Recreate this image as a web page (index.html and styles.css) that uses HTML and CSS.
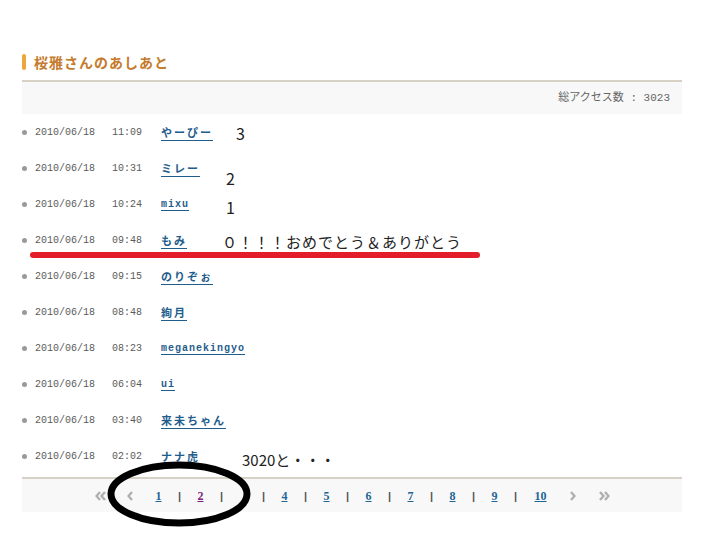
FILE: index.html
```html
<!DOCTYPE html>
<html lang="ja">
<head>
<meta charset="utf-8">
<title>桜雅さんのあしあと</title>
<link rel="stylesheet" href="styles.css">
</head>
<body>
<div class="page">
  <h2 class="title">桜雅さんのあしあと</h2>
  <div class="summary">総アクセス数 : 3023</div>
  <ul class="visits">
    <li class="visit"><span class="dot"></span><span class="date">2010/06/18</span><span class="time">11:09</span><a class="name jp" href="#">やーぴー</a></li>
    <li class="visit"><span class="dot"></span><span class="date">2010/06/18</span><span class="time">10:31</span><a class="name jp" href="#">ミレー</a></li>
    <li class="visit"><span class="dot"></span><span class="date">2010/06/18</span><span class="time">10:24</span><a class="name" href="#">mixu</a></li>
    <li class="visit"><span class="dot"></span><span class="date">2010/06/18</span><span class="time">09:48</span><a class="name jp" href="#">もみ</a></li>
    <li class="visit"><span class="dot"></span><span class="date">2010/06/18</span><span class="time">09:15</span><a class="name jp" href="#">のりぞぉ</a></li>
    <li class="visit"><span class="dot"></span><span class="date">2010/06/18</span><span class="time">08:48</span><a class="name jp" href="#">絢月</a></li>
    <li class="visit"><span class="dot"></span><span class="date">2010/06/18</span><span class="time">08:23</span><a class="name" href="#">meganekingyo</a></li>
    <li class="visit"><span class="dot"></span><span class="date">2010/06/18</span><span class="time">06:04</span><a class="name" href="#">ui</a></li>
    <li class="visit"><span class="dot"></span><span class="date">2010/06/18</span><span class="time">03:40</span><a class="name jp" href="#">来未ちゃん</a></li>
    <li class="visit"><span class="dot"></span><span class="date">2010/06/18</span><span class="time">02:02</span><a class="name jp" href="#">ナナ虎</a></li>
  </ul>
  <div class="pager">
    <span class="cell w25"><svg class="arrow" width="12" height="10" viewBox="0 0 12 10"><polyline points="5,1 1.5,5 5,9" /><polyline points="10,1 6.5,5 10,9" /></svg></span>
    <span class="cell w35"><svg class="arrow" width="7" height="10" viewBox="0 0 7 10"><polyline points="5,1 1.5,5 5,9" /></svg></span>
    <a class="cell num" href="#">1</a>
    <span class="cell sep">|</span>
    <a class="cell num visited" href="#">2</a>
    <span class="cell sep">|</span>
    <span class="cell"></span>
    <span class="cell sep">|</span>
    <a class="cell num" href="#">4</a>
    <span class="cell sep">|</span>
    <a class="cell num" href="#">5</a>
    <span class="cell sep">|</span>
    <a class="cell num" href="#">6</a>
    <span class="cell sep">|</span>
    <a class="cell num" href="#">7</a>
    <span class="cell sep">|</span>
    <a class="cell num" href="#">8</a>
    <span class="cell sep">|</span>
    <a class="cell num" href="#">9</a>
    <span class="cell sep">|</span>
    <a class="cell num w29" href="#">10</a>
    <span class="cell w35"><svg class="arrow" width="7" height="10" viewBox="0 0 7 10"><polyline points="2,1 5.5,5 2,9" /></svg></span>
    <span class="cell w27"><svg class="arrow" width="12" height="10" viewBox="0 0 12 10"><polyline points="2,1 5.5,5 2,9" /><polyline points="7,1 10.5,5 7,9" /></svg></span>
  </div>

  <span class="note n3">3</span>
  <span class="note n2">2</span>
  <span class="note n1">1</span>
  <span class="note n0">０！！！おめでとう＆ありがとう</span>
  <span class="note n3020">3020と・・・</span>
  <svg class="marks" width="710" height="538" viewBox="0 0 710 538">
    <line x1="33" y1="255" x2="477" y2="255" stroke="#e31e2a" stroke-width="6" stroke-linecap="round" />
    <ellipse cx="179" cy="494" rx="68" ry="29" fill="none" stroke="#000" stroke-width="7" />
  </svg>
</div>
</body>
</html>
```

FILE: styles.css
```css
html, body {
  margin: 0;
  padding: 0;
  background: #fff;
}

.page {
  position: relative;
  width: 660px;
  height: 485px;
  padding: 53px 28px 0 22px;
  font-family: "Liberation Mono", "Noto Sans CJK JP", monospace;
  color: #555;
}

.title {
  display: flex;
  align-items: center;
  height: 18px;
  margin: 0 0 9px 0;
  font-family: "Noto Sans CJK JP", sans-serif;
  font-size: 14px;
  font-weight: bold;
  letter-spacing: 1px;
  color: #c57b2e;
}

.title::before {
  content: "";
  display: block;
  width: 4px;
  height: 16px;
  margin-right: 8px;
  border-radius: 2px;
  background: #f0a43c;
}

.summary {
  border-top: 2px solid #d8d2c6;
  background: #f8f8f8;
  height: 32px;
  line-height: 32px;
  text-align: right;
  padding-right: 12px;
  font-size: 11px;
  color: #666;
}

.visits {
  list-style: none;
  margin: 0;
  padding: 0;
}

.visit {
  display: flex;
  align-items: center;
  height: 36px;
  font-size: 10px;
}

.dot {
  width: 5px;
  height: 5px;
  border-radius: 50%;
  background: #9a9a9a;
  margin-right: 8px;
}

.date {
  width: 77px;
  color: #5a5a5a;
}

.time {
  width: 49px;
  color: #5a5a5a;
}

.name {
  font-family: "Liberation Mono", "Noto Sans CJK JP", monospace;
  font-weight: bold;
  font-size: 10px;
  letter-spacing: 1px;
  color: #1f5d8c;
  text-decoration: underline;
  text-underline-offset: 3px;
}

.name.jp {
  font-family: "Noto Sans CJK JP", sans-serif;
  font-size: 11px;
  letter-spacing: 2px;
}

.pager {
  margin-top: 3px;
  border-top: 2px solid #d8d2c6;
  background: #f8f8f8;
  height: 33px;
  display: flex;
  align-items: center;
  padding-left: 66px;
}

.cell {
  width: 21px;
  flex: none;
  text-align: center;
  font-size: 11px;
  line-height: 14px;
}

.w25 { width: 25px; }
.w27 { width: 27px; }
.w29 { width: 29px; }
.w35 { width: 35px; }

.num {
  font-family: "Liberation Serif", serif;
  font-weight: bold;
  font-size: 12px;
  color: #1f6696;
  text-decoration: underline;
}

.num.visited {
  color: #7c1f7c;
}

.sep {
  color: #555;
  font-weight: bold;
  font-family: "Liberation Sans", sans-serif;
}

.arrow {
  display: inline-block;
  vertical-align: middle;
}

.arrow polyline {
  fill: none;
  stroke: #b0b0b0;
  stroke-width: 2.4;
}

.note {
  position: absolute;
  font-family: "Noto Sans CJK JP", sans-serif;
  color: #222;
  font-size: 16px;
  line-height: 1;
  white-space: nowrap;
}

.n3 { left: 236px; top: 125px; }
.n2 { left: 226px; top: 170px; }
.n1 { left: 226px; top: 199px; }
.n0 { left: 222px; top: 234px; font-size: 15px; letter-spacing: 1px; }
.n3020 { left: 242px; top: 452px; font-size: 15px; }

.marks {
  position: absolute;
  left: 0;
  top: 0;
  pointer-events: none;
}
```
